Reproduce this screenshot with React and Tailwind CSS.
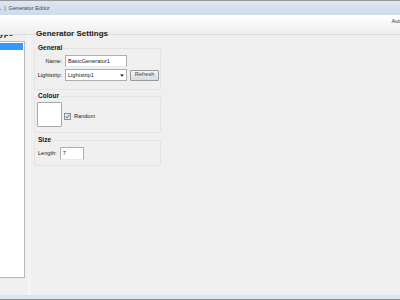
import React from 'react';

const Group = ({ title, className = '', children }) => (
    <fieldset className={`w-[127px] ml-[1px] border border-[#e3e3e3] rounded-[2px] ${className}`}>
        <legend className="ml-[2px] px-[1px] text-[6.5px] leading-[8px] font-bold text-[#111]">{title}</legend>
        {children}
    </fieldset>
);

const App = () => {
    return (
        <div className="w-[400px] h-[300px] overflow-hidden bg-[#efefef] flex flex-col font-['Liberation_Sans',Arial,sans-serif] text-[#1b1b1b]">
            <div className="h-px bg-[#979797]" />
            <div className="h-[14px] bg-gradient-to-b from-[#dde7f3] to-[#cddbec] flex items-center text-[5.6px] text-[#444] whitespace-nowrap overflow-hidden">
                <span className="-ml-[2px]">L</span>
                <span className="ml-[3px]">|</span>
                <span className="ml-[3px]">Generator Editor</span>
            </div>
            <div className="h-[20px] bg-gradient-to-b from-white to-[#eeeeee] border-b border-[#dcdcdc] flex justify-end items-start overflow-hidden">
                <span className="mt-[2px] -mr-[3px] text-[5.6px] text-[#333]">Auto</span>
            </div>

            <div className="flex-1 flex">
                {/* generator type list */}
                <div className="w-[25px] flex flex-col overflow-hidden">
                    <div className="-mt-[5px] -ml-[5px] text-[8px] leading-[8px] font-bold whitespace-nowrap">Type</div>
                    <div className="mt-[3px] h-[237px] bg-white border-t border-r border-b border-[#bababa] pt-px pr-px">
                        <div className="h-[7px] bg-[#3399ff]" />
                    </div>
                </div>
                <div className="ml-[2px] w-[4px] bg-[#f3f5f5]" />

                {/* settings */}
                <div className="ml-[2px] flex flex-col">
                    <div className="-mt-[5px] ml-[3px] text-[8px] leading-[8px] font-bold whitespace-nowrap">Generator Settings</div>

                    <Group title="General" className="mt-[6px] pb-[8px]">
                        <div className="mt-[3px] flex items-center text-[5.6px]">
                            <span className="w-[27px] text-right">Name:</span>
                            <div className="ml-[3px] w-[62px] h-[12px] bg-white border border-[#abadb3] border-b-[#e3e9ef] flex items-center px-[2px] text-[#222]">
                                BasicGenerator1
                            </div>
                        </div>
                        <div className="mt-[2px] flex items-center text-[5.6px]">
                            <span className="w-[27px] text-right">Lightstrip:</span>
                            <div className="ml-[3px] w-[62px] h-[12px] bg-white border border-[#abadb3] flex items-center pl-[2px] pr-[2px] text-[#222]">
                                <span className="flex-1">Lightstrip1</span>
                                <svg width="4" height="3" viewBox="0 0 4 3"><path d="M0 0.5h4L2 2.8z" fill="#222" /></svg>
                            </div>
                            <button className="ml-[3px] w-[29px] h-[11px] border border-[#9a9a9a] rounded-[1px] bg-gradient-to-b from-[#f4f4f4] to-[#dadada] text-[5.6px] leading-none text-[#3d3d4d]">
                                Refresh
                            </button>
                        </div>
                    </Group>

                    <Group title="Colour" className="mt-[2px] pb-[5px]">
                        <div className="mt-[2px] flex items-center text-[5.6px]">
                            <div className="ml-[2px] w-[25px] h-[25px] bg-white border border-[#a8a8a8] rounded-[1px]" />
                            <svg className="ml-[2px] mt-[3px]" width="7" height="7" viewBox="0 0 7 7">
                                <rect x="0.5" y="0.5" width="6" height="6" fill="#e4e9f0" stroke="#8e8f8f" />
                                <path d="M1.8 3.6l1.2 1.3L5.3 1.8" fill="none" stroke="#3c4f8a" strokeWidth="0.9" />
                            </svg>
                            <span className="ml-[3px] mt-[3px]">Random</span>
                        </div>
                    </Group>

                    <Group title="Size" className="mt-[3px] pb-[5px]">
                        <div className="mt-[3px] flex items-center text-[5.6px]">
                            <span className="ml-[3px]">Length:</span>
                            <div className="ml-[3px] w-[24px] h-[13px] bg-white border border-[#abadb3] border-b-[#e3e9ef] flex items-center px-[2px] text-[#222]">
                                7
                            </div>
                        </div>
                    </Group>
                </div>
            </div>

            <div className="h-[4px] bg-[#dae4ef]" />
            <div className="h-px bg-[#8a8a8a]" />
        </div>
    );
};

export default App;
